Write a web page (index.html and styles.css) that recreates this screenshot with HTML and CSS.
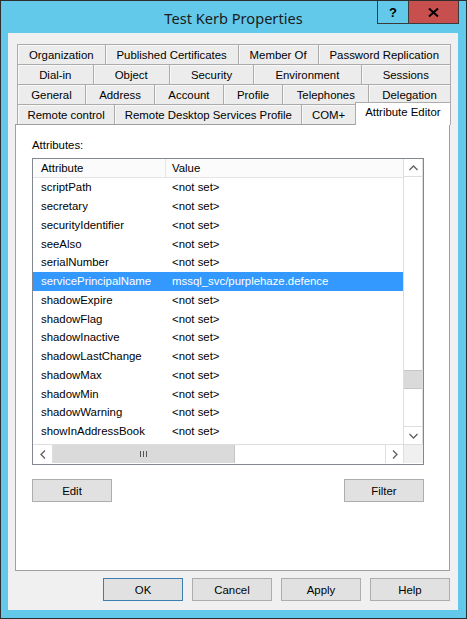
FILE: index.html
```html
<!DOCTYPE html>
<html lang="en">
<head>
    <meta charset="UTF-8">
    <title>Test Kerb Properties</title>
    <link rel="stylesheet" href="styles.css">
</head>
<body>
    <div class="window">
        <div class="titlebar">
            <span class="title">Test Kerb Properties</span>
            <div class="caption-buttons">
                <span class="cap help">?</span>
                <span class="cap close">
                    <svg width="11" height="9" viewBox="0 0 11 9"><path d="M1 0.5 L10 8.5 M10 0.5 L1 8.5" stroke="#000" stroke-width="2"/></svg>
                </span>
            </div>
        </div>

        <div class="client">
            <div class="tabs">
                <div class="tab-row">
                    <span class="tab">Organization</span>
                    <span class="tab">Published Certificates</span>
                    <span class="tab">Member Of</span>
                    <span class="tab">Password Replication</span>
                </div>
                <div class="tab-row">
                    <span class="tab">Dial-in</span>
                    <span class="tab">Object</span>
                    <span class="tab">Security</span>
                    <span class="tab">Environment</span>
                    <span class="tab">Sessions</span>
                </div>
                <div class="tab-row">
                    <span class="tab">General</span>
                    <span class="tab">Address</span>
                    <span class="tab">Account</span>
                    <span class="tab">Profile</span>
                    <span class="tab">Telephones</span>
                    <span class="tab">Delegation</span>
                </div>
                <div class="tab-row">
                    <span class="tab">Remote control</span>
                    <span class="tab">Remote Desktop Services Profile</span>
                    <span class="tab">COM+</span>
                    <span class="tab active">Attribute Editor</span>
                </div>
            </div>

            <div class="panel">
                <div class="label">Attributes:</div>
                <div class="listbox">
                    <div class="list-main">
                        <div class="list-view">
                            <div class="list-header">
                                <span class="col-attr">Attribute</span>
                                <span class="col-val">Value</span>
                            </div>
                            <div class="list-rows">
                                <div class="row"><span class="col-attr">scriptPath</span><span class="col-val">&lt;not set&gt;</span></div>
                                <div class="row"><span class="col-attr">secretary</span><span class="col-val">&lt;not set&gt;</span></div>
                                <div class="row"><span class="col-attr">securityIdentifier</span><span class="col-val">&lt;not set&gt;</span></div>
                                <div class="row"><span class="col-attr">seeAlso</span><span class="col-val">&lt;not set&gt;</span></div>
                                <div class="row"><span class="col-attr">serialNumber</span><span class="col-val">&lt;not set&gt;</span></div>
                                <div class="row selected"><span class="col-attr">servicePrincipalName</span><span class="col-val">mssql_svc/purplehaze.defence</span></div>
                                <div class="row"><span class="col-attr">shadowExpire</span><span class="col-val">&lt;not set&gt;</span></div>
                                <div class="row"><span class="col-attr">shadowFlag</span><span class="col-val">&lt;not set&gt;</span></div>
                                <div class="row"><span class="col-attr">shadowInactive</span><span class="col-val">&lt;not set&gt;</span></div>
                                <div class="row"><span class="col-attr">shadowLastChange</span><span class="col-val">&lt;not set&gt;</span></div>
                                <div class="row"><span class="col-attr">shadowMax</span><span class="col-val">&lt;not set&gt;</span></div>
                                <div class="row"><span class="col-attr">shadowMin</span><span class="col-val">&lt;not set&gt;</span></div>
                                <div class="row"><span class="col-attr">shadowWarning</span><span class="col-val">&lt;not set&gt;</span></div>
                                <div class="row"><span class="col-attr">showInAddressBook</span><span class="col-val">&lt;not set&gt;</span></div>
                            </div>
                        </div>
                        <div class="vscroll">
                            <span class="sb-btn">
                                <svg width="9" height="6" viewBox="0 0 9 6"><path d="M0.5 5 L4.5 1 L8.5 5" fill="none" stroke="#606060" stroke-width="1.3"/></svg>
                            </span>
                            <div class="vtrack"><div class="vthumb"></div></div>
                            <span class="sb-btn">
                                <svg width="9" height="6" viewBox="0 0 9 6"><path d="M0.5 1 L4.5 5 L8.5 1" fill="none" stroke="#606060" stroke-width="1.3"/></svg>
                            </span>
                        </div>
                    </div>
                    <div class="hscroll">
                        <span class="sb-btn hbtn">
                            <svg width="6" height="9" viewBox="0 0 6 9"><path d="M5 0.5 L1 4.5 L5 8.5" fill="none" stroke="#606060" stroke-width="1.3"/></svg>
                        </span>
                        <div class="hthumb"><span class="grip"></span><span class="grip"></span><span class="grip"></span></div>
                        <div class="htrack"></div>
                        <span class="sb-btn hbtn">
                            <svg width="6" height="9" viewBox="0 0 6 9"><path d="M1 0.5 L5 4.5 L1 8.5" fill="none" stroke="#606060" stroke-width="1.3"/></svg>
                        </span>
                        <span class="corner"></span>
                    </div>
                </div>
                <div class="panel-buttons">
                    <button class="btn">Edit</button>
                    <button class="btn">Filter</button>
                </div>
            </div>

            <div class="dialog-buttons">
                <button class="btn default">OK</button>
                <button class="btn">Cancel</button>
                <button class="btn">Apply</button>
                <button class="btn">Help</button>
            </div>
        </div>
    </div>
</body>
</html>
```

FILE: styles.css
```css
body {
    margin: 0;
    background: #ffffff;
    font-family: "Liberation Sans", Arial, sans-serif;
    font-size: 11.4px;
    color: #000;
}

.window {
    width: 465px;
    height: 617px;
    border: 1px solid #2e2e2e;
    background: #62c9ea;
    position: relative;
}

/* title bar */
.titlebar {
    height: 32px;
    display: flex;
    align-items: center;
    justify-content: center;
}

.title {
    font-family: "Noto Sans", "Open Sans", sans-serif;
    font-size: 14.6px;
    color: #1b1b1b;
    margin-top: 1px;
}

.caption-buttons {
    position: absolute;
    top: 0;
    right: 7px;
    display: flex;
}

.cap {
    height: 22px;
    display: flex;
    align-items: center;
    justify-content: center;
    border-bottom: 1px solid #3a3a3a;
}

.help {
    width: 30px;
    border-left: 1px solid #3a3a3a;
    border-right: 1px solid #3a3a3a;
    font-family: "Liberation Sans", Arial, sans-serif;
    font-weight: bold;
    font-size: 13px;
}

.close {
    width: 49px;
    background: #c7504f;
    border-right: 1px solid #3a3a3a;
}

.client {
    margin-left: 7px;
    width: 450px;
    height: 577px;
    background: #f0f0f0;
    overflow: hidden;
}

/* property sheet tabs */
.tabs {
    margin: 11px 0 0 9px;
    width: 434px;
}

.tab-row {
    display: flex;
    height: 20px;
}

.tab {
    flex: 1 1 auto;
    display: flex;
    align-items: center;
    justify-content: center;
    white-space: nowrap;
    background: #ececec;
    border-top: 1px solid #acacac;
    border-left: 1px solid #acacac;
    box-shadow: inset 1px 1px 0 #f8f8f8;
    padding-top: 1px;
}

.tab:last-child {
    border-right: 1px solid #acacac;
}

.tab.active {
    background: #ffffff;
    box-shadow: none;
    margin-top: -2px;
    margin-bottom: -1px;
    padding: 0 0 4px;
    position: relative;
    z-index: 1;
}

.panel {
    margin-left: 7px;
    width: 435px;
    height: 445px;
    background: #ffffff;
    border: 1px solid #a0a0a0;
    padding: 13px 0 0 16px;
    box-sizing: border-box;
    height: 447px;
}

.label {
    height: 14px;
    line-height: 14px;
    margin-bottom: 6px;
}

/* attribute list */
.listbox {
    width: 390px;
    height: 305px;
    border: 1px solid #828790;
    display: flex;
    flex-direction: column;
}

.list-main {
    display: flex;
    height: 285px;
}

.list-view {
    width: 370px;
    overflow: hidden;
}

.list-header {
    display: flex;
    height: 18px;
    line-height: 18px;
    background: #fbfbfb;
    border-bottom: 1px solid #e5e5e5;
}

.list-header .col-attr {
    border-right: 1px solid #e5e5e5;
    width: 124px;
}

.col-attr {
    width: 125px;
    padding-left: 8px;
    white-space: nowrap;
}

.col-val {
    padding-left: 6px;
    white-space: nowrap;
}

.row {
    display: flex;
    height: 18.75px;
    align-items: center;
}

.row.selected {
    background: #3399ff;
    color: #ffffff;
}

.vscroll {
    width: 18px;
    display: flex;
    flex-direction: column;
    border-left: 1px solid #dedede;
    border-right: 1px solid #dedede;
}

.sb-btn {
    height: 18px;
    display: flex;
    align-items: center;
    justify-content: center;
    background: #ffffff;
    box-sizing: border-box;
}

.vscroll .sb-btn:first-child {
    border-bottom: 1px solid #dedede;
}

.vscroll .sb-btn:last-child {
    border-top: 1px solid #dedede;
}

.vtrack {
    flex: 1;
    background: #ffffff;
}

.vthumb {
    margin-top: 193px;
    height: 17px;
    background: #dadada;
    border-top: 1px solid #c6c6c6;
    border-bottom: 1px solid #c6c6c6;
}

.hscroll {
    display: flex;
    height: 19px;
    border-top: 1px solid #dedede;
    box-sizing: border-box;
}

.hbtn {
    width: 20px;
    border-right: 1px solid #dedede;
}

.hbtn:nth-last-child(2) {
    width: 18px;
    border-right: none;
    border-left: 1px solid #dedede;
}

.hthumb {
    width: 181px;
    background: #dadada;
    border-right: 1px solid #c6c6c6;
    display: flex;
    align-items: center;
    justify-content: center;
    gap: 2px;
}

.grip {
    width: 1px;
    height: 6px;
    background: #555;
}

.htrack {
    flex: 1;
    background: #ffffff;
}

.corner {
    width: 19px;
    background: #f0f0f0;
    border-left: 1px solid #dedede;
}

/* buttons */
.btn {
    width: 80px;
    height: 23px;
    padding: 0;
    font-family: "Liberation Sans", Arial, sans-serif;
    font-size: 11.4px;
    color: #000;
    background: #e1e1e1;
    border: 1px solid #adadad;
}

.btn.default {
    border-color: #3c7fb1;
}

.panel-buttons {
    width: 392px;
    margin-top: 14px;
    display: flex;
    justify-content: space-between;
}

.dialog-buttons {
    margin-top: 7px;
    padding-right: 8px;
    display: flex;
    justify-content: flex-end;
    gap: 9px;
}
```
